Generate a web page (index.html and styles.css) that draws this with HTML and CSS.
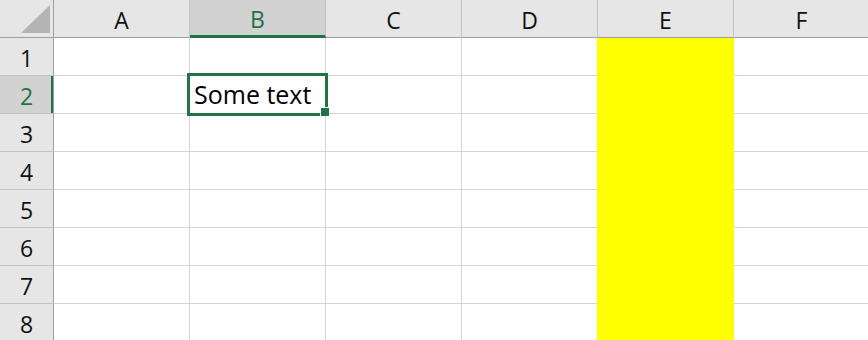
FILE: index.html
```html
<!DOCTYPE html>
<html>
<head>
    <meta charset="UTF-8">
    <title>Sheet1</title>
    <link rel="stylesheet" href="styles.css">
</head>
<body>
    <div class="sheet">
        <div class="grid">
            <div class="corner"><span class="corner-mark"></span></div>
            <div class="col-head">A</div>
            <div class="col-head active">B</div>
            <div class="col-head">C</div>
            <div class="col-head">D</div>
            <div class="col-head">E</div>
            <div class="col-head">F</div>

            <div class="row-head">1</div>
            <div class="cell"></div><div class="cell"></div><div class="cell"></div><div class="cell"></div><div class="cell fill"></div><div class="cell"></div>

            <div class="row-head active">2</div>
            <div class="cell"></div><div class="cell text">Some text</div><div class="cell"></div><div class="cell"></div><div class="cell fill"></div><div class="cell"></div>

            <div class="row-head">3</div>
            <div class="cell"></div><div class="cell"></div><div class="cell"></div><div class="cell"></div><div class="cell fill"></div><div class="cell"></div>

            <div class="row-head">4</div>
            <div class="cell"></div><div class="cell"></div><div class="cell"></div><div class="cell"></div><div class="cell fill"></div><div class="cell"></div>

            <div class="row-head">5</div>
            <div class="cell"></div><div class="cell"></div><div class="cell"></div><div class="cell"></div><div class="cell fill"></div><div class="cell"></div>

            <div class="row-head">6</div>
            <div class="cell"></div><div class="cell"></div><div class="cell"></div><div class="cell"></div><div class="cell fill"></div><div class="cell"></div>

            <div class="row-head">7</div>
            <div class="cell"></div><div class="cell"></div><div class="cell"></div><div class="cell"></div><div class="cell fill"></div><div class="cell"></div>

            <div class="row-head">8</div>
            <div class="cell"></div><div class="cell"></div><div class="cell"></div><div class="cell"></div><div class="cell fill"></div><div class="cell"></div>
        </div>

        <!-- selection of B2 -->
        <div class="selection"></div>
        <div class="handle"></div>
    </div>
</body>
</html>
```

FILE: styles.css
```css
html, body {
    margin: 0;
    padding: 0;
    background: #fff;
    overflow: hidden;
}
.sheet {
    position: relative;
    width: 868px;
    height: 340px;
    overflow: hidden;
}
.grid {
    display: grid;
    grid-template-columns: 54px repeat(6, 136px);
    grid-auto-rows: 38px;
    font-family: "Open Sans", "Noto Sans", sans-serif;
}
.grid > div {
    box-sizing: border-box;
    border-right: 1px solid #d4d4d4;
    border-bottom: 1px solid #d4d4d4;
}
.corner {
    position: relative;
    background: #e6e6e6;
    border-right-color: #9e9e9e !important;
    border-bottom-color: #9e9e9e !important;
}
.corner-mark {
    position: absolute;
    left: 21px;
    top: 5px;
    width: 29px;
    height: 28px;
    background: #b4b4b4;
    clip-path: polygon(100% 0, 100% 100%, 0 100%);
}
.col-head, .row-head {
    background: #e6e6e6;
    color: #111;
    font-size: 23px;
    line-height: 37px;
    text-align: center;
    padding-top: 2px;
}
.col-head {
    border-right-color: #c4c4c4 !important;
    border-bottom-color: #9e9e9e !important;
}
.row-head {
    border-right-color: #9e9e9e !important;
    border-bottom-color: #c4c4c4 !important;
}
.col-head.active {
    background: #d2d2d2;
    color: #217346;
    border-bottom: 3px solid #217346 !important;
    line-height: 35px;
}
.row-head.active {
    background: #d2d2d2;
    color: #217346;
    box-shadow: inset -2px 0 0 #217346;
}
.cell.fill {
    background: #ffff00;
    border-color: #ffff00;
    box-shadow: -1px 0 0 #ffff00;
}
.cell.text {
    font-size: 25px;
    line-height: 37px;
    padding-left: 4px;
    color: #000;
    white-space: nowrap;
}
.selection {
    position: absolute;
    left: 187px;
    top: 73px;
    width: 141px;
    height: 43px;
    box-sizing: border-box;
    border: 3px solid #217346;
}
.handle {
    position: absolute;
    left: 320px;
    top: 107px;
    width: 8px;
    height: 8px;
    background: #217346;
    border: 1px solid #fff;
    border-right: 0;
    border-bottom: 0;
}
```
